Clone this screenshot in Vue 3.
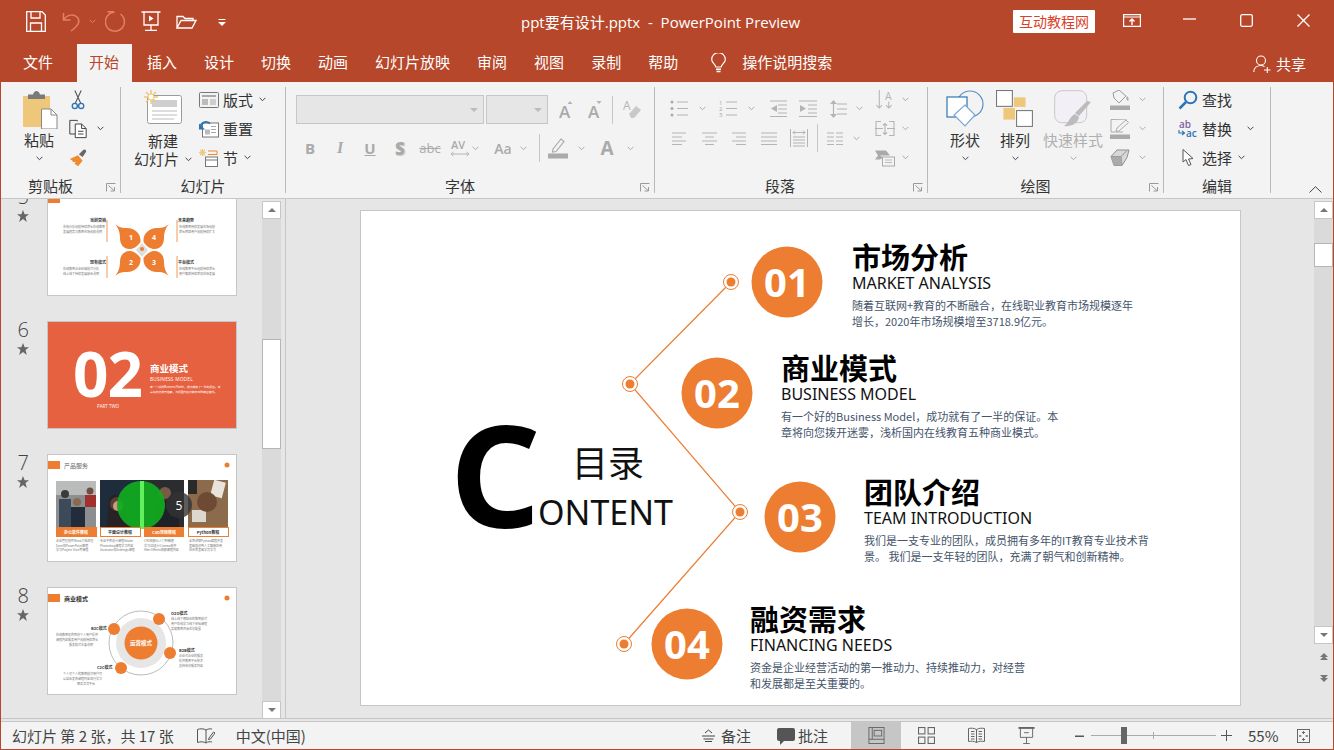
<script setup>
const tabs = ['插入', '设计', '切换', '动画', '幻灯片放映', '审阅', '视图', '录制', '帮助']
const items = [
  { n: '01', cx: 427, cy: 72, cn: 'market', zh: '市场分析', en: 'MARKET ANALYSIS', d: ['随着互联网+教育的不断融合，在线职业教育市场规模逐年', '增长，2020年市场规模增至3718.9亿元。'] },
  { n: '02', cx: 357, cy: 183, cn: 'model', zh: '商业模式', en: 'BUSINESS MODEL', d: ['有一个好的Business Model，成功就有了一半的保证。本', '章将向您拨开迷雾，浅析国内在线教育五种商业模式。'] },
  { n: '03', cx: 440, cy: 307, cn: 'team', zh: '团队介绍', en: 'TEAM INTRODUCTION', d: ['我们是一支专业的团队，成员拥有多年的IT教育专业技术背', '景。 我们是一支年轻的团队，充满了朝气和创新精神。'] },
  { n: '04', cx: 327, cy: 434, cn: 'fund', zh: '融资需求', en: 'FINANCING NEEDS', d: ['资金是企业经营活动的第一推动力、持续推动力，对经营', '和发展都是至关重要的。'] },
]
const nodes = [[371, 72], [270, 174], [380, 302], [264, 434]]
</script>

<template>
  <div class="win">
    <svg class="defs" aria-hidden="true">
      <defs>
        <symbol id="chv" viewBox="0 0 7 5"><path d="M.6.8 3.5 3.7 6.4.8" fill="none" stroke="currentColor" stroke-width="1"/></symbol>
        <symbol id="star" viewBox="0 0 12 12"><path d="M6 0 7.6 4.2H12L8.5 7 9.8 12 6 9.1 2.2 12 3.5 7 0 4.2H4.4Z" fill="#666"/></symbol>
        <symbol id="lnch" viewBox="0 0 10 9"><path d="M.5 8.5V.5H9.500M2.500 2.500 8 7.500M4.500 8H8.500V4" fill="none" stroke="#9a9a9a" stroke-width="1"/></symbol>
      </defs>
    </svg>

    <header class="titlebar">
      <div class="qat">
        <svg class="q1" viewBox="0 0 20 21" fill="none" stroke="#fff" stroke-width="1.300"><path d="M.7.7H16L19.300 4V20.300H.7ZM5 .7V7H14V.7M4.500 20.300V12H15.500V20.300"/></svg>
        <svg class="q2" viewBox="0 0 19 21" fill="none" stroke="#e3806a" stroke-width="1.500"><path d="M1.500 2V9H8.500M2 8.500C5 3.500 12 2.500 15.500 6.500 19 11 15 16 9 20"/></svg>
        <svg class="q3 chev" style="color:#e3806a"><use href="#chv"/></svg>
        <svg class="q4" viewBox="0 0 21 21" fill="none" stroke="#e3806a" stroke-width="1.500"><path d="M15.500 3A9.500 9.500 0 1 1 9.500 1.200M9 0 2.500 1"/></svg>
        <svg class="q5" viewBox="0 0 20 20" fill="none" stroke="#fff" stroke-width="1.300"><path d="M.5 1H19.500M3 1V14H17V1M10 14V19.500M4 19.500H16"/><path d="M8 4.500 12.500 7.500 8 10.500Z" fill="#fff" stroke="none"/></svg>
        <svg class="q6" viewBox="0 0 21 14" fill="none" stroke="#fff" stroke-width="1.300"><path d="M1 13V1.500H7L9 3.500H17V5.500M1 13 5 5.500H20L16 13Z"/></svg>
        <svg class="q7" viewBox="0 0 8 8"><path d="M.5 0H7.500V1H.5ZM0 3H8L4 7Z" fill="#fff"/></svg>
      </div>
      <div class="doc">ppt要有设计.pptx&nbsp; - &nbsp;PowerPoint Preview</div>
      <div class="winctl">
        <span class="brand">互动教程网</span>
        <svg class="w1" viewBox="0 0 18 13" fill="none" stroke="#fff" stroke-width="1.200"><path d="M.6.600H17.400V12.400H.6ZM.6 3H17.400"/><path d="M9 11V5M6.500 7.500 9 5 11.500 7.500" stroke-width="1.400"/></svg>
        <svg class="w2" viewBox="0 0 13 2"><path d="M0 1H13" stroke="#fff" stroke-width="1.300"/></svg>
        <svg class="w3" viewBox="0 0 13 13"><rect x=".7" y=".7" width="11.600" height="11.600" rx="1.500" fill="none" stroke="#fff" stroke-width="1.300"/></svg>
        <svg class="w4" viewBox="0 0 13 13"><path d="M.5.500 12.500 12.500M12.500.500.5 12.500" stroke="#fff" stroke-width="1.300"/></svg>
      </div>
    </header>

    <nav class="tabs">
      <span class="tab file">文件</span>
      <span class="tab active">开始</span>
      <span v-for="t in tabs" :key="t" class="tab">{{ t }}</span>
      <svg class="bulb" viewBox="0 0 15 20" fill="none" stroke="#fff" stroke-width="1.200"><path d="M4.800 14C4.500 11 .7 10 .7 6.500A6.800 6.800 0 0 1 14.300 6.500C14.300 10 10.500 11 10.200 14Z"/><path d="M5 16.200H10M5.500 18.500H9.500" stroke-width="1.500"/></svg>
      <span class="search">操作说明搜索</span>
      <span class="share">
        <svg viewBox="0 0 18 18" fill="none" stroke="#fff" stroke-width="1.100"><circle cx="8" cy="5.500" r="4.500"/><path d="M.7 17C1 13 4 10.500 8 10.500 9.500 10.500 10.500 11 11.500 11.500M11 15H17.500M14.300 12V18"/></svg>
        共享
      </span>
    </nav>

    <section class="ribbon">
      <!-- 剪贴板 -->
      <div class="group g1">
        <div class="gbody">
          <div class="big b-paste">
            <svg class="ic-paste" viewBox="0 0 36 38">
              <rect x="1" y="5" width="27" height="31" rx="1" fill="#eec77b"/>
              <path d="M6 3.500H11Q12 0 14.500 0 17 0 18 3.500H23V8H6Z" fill="#7a7a7a"/>
              <path d="M19.500 18H29L35 24V38H19.500Z" fill="#fff" stroke="#888"/>
              <path d="M29 18V24H35" fill="none" stroke="#888"/>
            </svg>
            <span class="blabel">粘贴</span>
            <svg class="chev dn"><use href="#chv"/></svg>
          </div>
          <div class="col c-clip">
            <div class="row">
              <svg class="ic20" viewBox="0 0 22 21" fill="none"><path d="M7.500 0 14 14M14.500 0 8 14" stroke="#555" stroke-width="1.200"/><circle cx="7.500" cy="17" r="2.800" stroke="#2e75b6" stroke-width="1.500"/><circle cx="14.500" cy="17" r="2.800" stroke="#2e75b6" stroke-width="1.500"/></svg>
            </div>
            <div class="row">
              <svg class="ic20" viewBox="0 0 22 21" fill="none" stroke="#444" stroke-width="1.100"><path d="M8 16H2V1H10L11 2"/><path d="M8 5H15L20 10V20H8Z" fill="#fff"/><path d="M15 5V10H20M11 13H17M11 16H17"/></svg>
              <svg class="chev m9"><use href="#chv"/></svg>
            </div>
            <div class="row">
              <svg class="ic20" viewBox="0 0 22 20"><path d="M2 11 11 7 16 13 11 19 7 16 9 15 5 14 5 13Z" fill="#ed8b2e"/><path d="M12 6 17 1Q20 0 20 3L16 9Z" fill="#666"/></svg>
            </div>
          </div>
        </div>
        <div class="glabel">剪贴板</div>
        <svg class="launch"><use href="#lnch"/></svg>
      </div>
      <i class="sep"></i>

      <!-- 幻灯片 -->
      <div class="group g2">
        <div class="gbody">
          <div class="big b-new">
            <svg class="ic-new" viewBox="0 0 38 34">
              <rect x="3.500" y="5.500" width="34" height="28" rx="2" fill="#fff" stroke="#9a9a9a"/>
              <rect x="8" y="10" width="25" height="7" fill="#cfcfcf"/>
              <path d="M8 21H33M8 25H33M8 29H30" stroke="#bdbdbd" stroke-width="1"/>
              <path d="M7 0V14M0 7H14M2 2 12 12M12 2 2 12" stroke="#eec77b" stroke-width="1.500"/>
              <circle cx="7" cy="7" r="3" fill="#fff" stroke="#eec77b"/>
            </svg>
            <span class="blabel l-new">新建</span>
            <span class="blabel inline">幻灯片<svg class="chev m6"><use href="#chv"/></svg></span>
          </div>
          <div class="col c-slide">
            <div class="row">
              <svg class="ic20" viewBox="0 0 20 16" fill="none" stroke="#777"><rect x=".5" y=".5" width="19" height="15" rx="1"/><rect x="3" y="3" width="14" height="2" fill="#aaa" stroke="none"/><rect x="3" y="7" width="6" height="6" fill="#bbb" stroke="none"/><path d="M11 8H17M11 10H17M11 12H17" stroke="#aaa"/></svg>
              <span class="t4">版式</span><svg class="chev m6"><use href="#chv"/></svg>
            </div>
            <div class="row">
              <svg class="ic20" viewBox="0 0 20 17" fill="none"><rect x="3.500" y="2.500" width="16" height="14" fill="#fff" stroke="#777"/><rect x="6" y="9" width="5" height="5" fill="#bbb"/><path d="M12 6H17M12 9H17M12 12H17" stroke="#aaa"/><path d="M1 7C2 2 7 0 11 3" stroke="#2e75b6" stroke-width="2"/><path d="M0 3V9H6Z" fill="#2e75b6"/></svg>
              <span class="t4">重置</span>
            </div>
            <div class="row">
              <svg class="ic20" viewBox="0 0 20 18" fill="none"><path d="M3.500 0V7M0 3.500H7M1 1 6 6M6 1 1 6" stroke="#eec77b" stroke-width="1.200"/><path d="M9 2H18V5.500H9" stroke="#ed8b2e"/><rect x="6.500" y="8" width="12" height="9.500" stroke="#777" fill="#fff"/><path d="M6.500 11H18.500" stroke="#777"/></svg>
              <span class="t4">节</span><svg class="chev m6"><use href="#chv"/></svg>
            </div>
          </div>
        </div>
        <div class="glabel">幻灯片</div>
      </div>
      <i class="sep"></i>

      <!-- 字体 -->
      <div class="group g3">
        <div class="gbody column">
          <div class="frow fa">
            <span class="combo c1"><i></i></span>
            <span class="combo c2"><i></i></span>
            <svg class="f-a1" viewBox="0 0 15 18"><text x="0" y="17" class="ga big-a">A</text><path d="M8.500 3 11 0 13.500 3Z" fill="#b4b4b4"/></svg>
            <svg class="f-a2" viewBox="0 0 15 18"><text x="0" y="17" class="ga big-a">A</text><path d="M8.500 0 11 3 13.500 0Z" fill="#b4b4b4"/></svg>
            <i class="vline v1"></i>
            <svg class="f-clr" viewBox="0 0 18 19"><text x="0" y="10" class="ga sm-a">A</text><path d="M6 14 13 6 18 10 11 18H8Z" fill="#c9c9c9"/></svg>
          </div>
          <div class="frow fb">
            <span class="fc b">B</span>
            <span class="fc i">I</span>
            <span class="fc u">U</span>
            <span class="fc s">S</span>
            <span class="fc abc">abc</span>
            <svg class="fc-av" viewBox="0 0 20 20"><text x="1" y="11" class="ga av">AV</text><path d="M1 16H19M3.500 14 1 16 3.500 18M16.500 14 19 16 16.500 18" stroke="#b4b4b4" fill="none"/></svg>
            <svg class="chev off m2"><use href="#chv"/></svg>
            <span class="fc aa">Aa</span>
            <svg class="chev off m3"><use href="#chv"/></svg>
            <i class="vline v2"></i>
            <svg class="f-hl" viewBox="0 0 20 21"><path d="M5 11 13 1 16 3.500 8 13.500 4.500 14Z" fill="none" stroke="#aaa" stroke-width="1.200"/><rect y="15.500" width="20" height="5" fill="#aaa"/></svg>
            <svg class="chev off m10"><use href="#chv"/></svg>
            <span class="fc bigA">A</span>
            <svg class="chev off m10"><use href="#chv"/></svg>
          </div>
        </div>
        <div class="glabel">字体</div>
        <svg class="launch"><use href="#lnch"/></svg>
      </div>
      <i class="sep"></i>

      <!-- 段落 -->
      <div class="group g4">
        <div class="gbody">
          <div class="pleft">
            <div class="prow p1">
              <svg class="p18" viewBox="0 0 18 17" stroke="#b4b4b4"><circle cx="2" cy="2" r="1.500" fill="#aaa" stroke="none"/><circle cx="2" cy="8.500" r="1.500" fill="#aaa" stroke="none"/><circle cx="2" cy="15" r="1.500" fill="#aaa" stroke="none"/><path d="M7 2H18M7 8.500H18M7 15H18"/></svg>
              <svg class="chev off pm11"><use href="#chv"/></svg>
              <svg class="p18 pm13" viewBox="0 0 18 17" stroke="#b4b4b4"><text x="0" y="5" class="nums">1</text><text x="0" y="11" class="nums">2</text><text x="0" y="17" class="nums">3</text><path d="M7 2H18M7 8.500H18M7 15H18"/></svg>
              <svg class="chev off pm11"><use href="#chv"/></svg>
              <svg class="p18 pm14" viewBox="0 0 18 17" stroke="#b4b4b4" fill="none"><path d="M1 1H18M9 5H18M9 9H18M9 13H18M1 16.500H18"/><path d="M8 5 2 8.500 8 12Z" fill="#b4b4b4" stroke="none"/></svg>
              <svg class="p18 pm12" viewBox="0 0 18 17" stroke="#b4b4b4" fill="none"><path d="M0 1H18M9 5H18M9 9H18M9 13H18M0 16.500H18"/><path d="M1 5 7 8.500 1 12Z" fill="#b4b4b4" stroke="none"/></svg>
              <svg class="p17 pm13" viewBox="0 0 17 18" stroke="#b4b4b4" fill="none"><path d="M3.500 3V15M7 4H17M7 9H17M7 14H17" stroke-width="1.200"/><path d="M0 4 3.500 0 7 4ZM0 14 3.500 18 7 14Z" fill="#b4b4b4" stroke="none"/></svg>
              <svg class="chev off pm9"><use href="#chv"/></svg>
            </div>
            <div class="prow p2">
              <svg class="ap a14" viewBox="0 0 14 13" stroke="#b4b4b4"><path d="M0 1H14M0 5H10M0 9H14M0 12.500H10"/></svg>
              <svg class="ap a15 pm16" viewBox="0 0 15 13" stroke="#b4b4b4"><path d="M0 1H15M3 5H12M0 9H15M3 12.500H12"/></svg>
              <svg class="ap a14 pm15" viewBox="0 0 14 13" stroke="#b4b4b4"><path d="M0 1H14M4 5H14M0 9H14M4 12.500H14"/></svg>
              <svg class="ap a16 pm15" viewBox="0 0 16 13" stroke="#b4b4b4"><path d="M0 1H16M0 5H16M0 9H16M0 12.500H16"/></svg>
              <svg class="ap a18 pm13" viewBox="0 0 18 19" stroke="#b4b4b4" fill="none"><path d="M.5 0V18M17.500 0V18M3 8H15M3 11H15M3 14H15M3 17H15M3 3.500H15M5 1.500 3 3.500 5 5.500M13 1.500 15 3.500 13 5.500"/></svg>
              <i class="vline v3"></i>
              <svg class="ap a16 pm9" viewBox="0 0 16 13" stroke="#b4b4b4"><path d="M0 1H7M9 1H16M0 5H7M9 5H16M0 9H7M9 9H16M0 12.500H7M9 12.500H16"/></svg>
              <svg class="chev off pm10"><use href="#chv"/></svg>
            </div>
          </div>
          <div class="col">
            <div class="row">
              <svg class="pic" viewBox="0 0 20 21" fill="none" stroke="#b4b4b4" stroke-width="1.100"><path d="M4 0V19M1 16 4 19 7 16M14 12V19M11 16 14 19 17 16"/><text x="10" y="10" class="ga sm-b">A</text></svg>
              <svg class="chev off pm7"><use href="#chv"/></svg>
            </div>
            <div class="row">
              <svg class="pic" viewBox="0 0 20 17" fill="none" stroke="#b4b4b4" stroke-width="1.100"><path d="M6 1H1V15H6M14 1H19V15H14M0 8H8M12 8H20M10 3V14M8 5 10 3 12 5M8 12 10 14 12 12"/></svg>
              <svg class="chev off pm7"><use href="#chv"/></svg>
            </div>
            <div class="row">
              <svg class="pic" viewBox="0 0 20 17"><path d="M0 1H11L15 6H5L8 8 5 10H0L3 6Z" fill="#aaa"/><rect x="7.500" y="7.500" width="12" height="9" fill="#f3f3f3" stroke="#aaa"/><path d="M10 10.500H17M10 13H17" stroke="#bbb"/></svg>
              <svg class="chev off pm7"><use href="#chv"/></svg>
            </div>
          </div>
        </div>
        <div class="glabel">段落</div>
        <svg class="launch"><use href="#lnch"/></svg>
      </div>
      <i class="sep"></i>

      <!-- 绘图 -->
      <div class="group g5">
        <div class="gbody">
          <div class="big b-shape">
            <svg class="ic-shape" viewBox="0 0 38 38" fill="none" stroke="#5b8fc7" stroke-width="1.200">
              <circle cx="24" cy="14" r="13"/>
              <rect x="1" y="7" width="20" height="20" fill="#fff" stroke="#2e75b6"/>
              <path d="M19 15 29 25 19 36 8 25Z" fill="#fff" stroke="#7aa6d6"/>
            </svg>
            <span class="blabel">形状</span>
            <svg class="chev dn"><use href="#chv"/></svg>
          </div>
          <div class="big b-arr">
            <svg class="ic-shape" viewBox="0 0 36 36">
              <rect x=".5" y=".5" width="15" height="15" fill="#fff" stroke="#777"/>
              <rect x="17" y="7" width="11" height="9" fill="#eec77b"/>
              <rect x="7" y="17" width="11" height="11" fill="#eec77b"/>
              <rect x="19.500" y="19.500" width="15" height="15" fill="#fff" stroke="#777"/>
            </svg>
            <span class="blabel">排列</span>
            <svg class="chev dn"><use href="#chv"/></svg>
          </div>
          <div class="big b-quick">
            <svg class="ic-shape" viewBox="0 0 38 38">
              <rect x=".7" y=".7" width="32" height="32" rx="7" fill="#f3eff6" stroke="#c8c8c8"/>
              <path d="M37 12 25 26 21 23 33 11ZM21 24 25 27C24 34 16 37 10 36 15 33 15 27 21 24Z" fill="#bcbcbc"/>
            </svg>
            <span class="blabel gray">快速样式</span>
            <svg class="chev off dn"><use href="#chv"/></svg>
          </div>
          <div class="col c-draw">
            <div class="row">
              <svg class="ic20" viewBox="0 0 20 20"><path d="M3 3 9 0 16 6 9 13 4 8Z" fill="#f3f3f3" stroke="#9a9a9a"/><path d="M17 6C19 8 19 10 18 11 16 10 16 8 17 6Z" fill="#aaa"/><rect y="15.500" width="20" height="4.500" fill="#aaa"/></svg>
              <svg class="chev off m9"><use href="#chv"/></svg>
            </div>
            <div class="row">
              <svg class="ic20" viewBox="0 0 20 20" fill="none"><path d="M17 0 1 .5V13H13" stroke="#aaa"/><path d="M7 9 16 1 18.500 3.500 9 12 6 12.500Z" fill="#f3f3f3" stroke="#aaa"/><rect y="15.500" width="20" height="4.500" fill="#aaa"/></svg>
              <svg class="chev off m9"><use href="#chv"/></svg>
            </div>
            <div class="row">
              <svg class="ic20" viewBox="0 0 20 17"><path d="M1 7 7 .5H19L17 8 12 16H4Z" fill="#d8d8d8" stroke="#8f8f8f"/><path d="M1 7H11L17 1M11 7 12 16" stroke="#8f8f8f" fill="none"/><path d="M1 7 11 7 12 16H4Z" fill="#aaa"/></svg>
              <svg class="chev off m9"><use href="#chv"/></svg>
            </div>
          </div>
        </div>
        <div class="glabel">绘图</div>
        <svg class="launch"><use href="#lnch"/></svg>
      </div>
      <i class="sep"></i>

      <!-- 编辑 -->
      <div class="group g6">
        <div class="gbody">
          <div class="col c-edit">
            <div class="row">
              <svg class="ic20" viewBox="0 0 20 19" fill="none"><circle cx="12.500" cy="7" r="5.800" stroke="#2e75b6" stroke-width="2"/><path d="M8 11.500 1.500 18" stroke="#2e75b6" stroke-width="2.500"/></svg>
              <span class="t4">查找</span>
            </div>
            <div class="row">
              <svg class="ic20" viewBox="0 0 20 18"><text x="1" y="8" class="abt pur">ab</text><text x="8" y="17" class="abt blu">ac</text><path d="M1 10V13H6M4 11 6.500 13 4 15" fill="none" stroke="#2e75b6" stroke-width="1.200"/></svg>
              <span class="t4">替换</span><svg class="chev m15"><use href="#chv"/></svg>
            </div>
            <div class="row">
              <svg class="ic20" viewBox="0 0 20 18"><path d="M5 .5V13L8 10.500 10.500 16.500 13 15.500 10.500 10 15 9.500Z" fill="#fff" stroke="#555"/></svg>
              <span class="t4">选择</span><svg class="chev m6"><use href="#chv"/></svg>
            </div>
          </div>
        </div>
        <div class="glabel">编辑</div>
      </div>
      <i class="sep"></i>
      <div class="collapse">
        <svg viewBox="0 0 13 7"><path d="M.5 6.500 6.500.7 12.500 6.500" fill="none" stroke="#444"/></svg>
      </div>
    </section>

    <main class="work">
      <aside class="panel">
        <div class="list">
          <div class="item">
            <div class="idx"><span class="num">5</span><svg class="star"><use href="#star"/></svg></div>
            <svg class="thumb" viewBox="0 0 190 108">
              <rect width="190" height="108" fill="#fff"/>
              <rect x="1" y="7" width="12" height="8" fill="#ed7d31"/>
              <g fill="#ed7d31">
                <path id="pt" d="M65 32C70 39 73 40 80 40 88 40 93.500 46 93.500 52V54C90 59 86 61 83 61 76 61 73 56 73 50 73 42 70 38 65 32Z"/>
                <path d="M125 32C120 39 117 40 110 40 102 40 96.500 46 96.500 52V54C100 59 104 61 107 61 114 61 117 56 117 50 117 42 120 38 125 32Z"/>
                <path d="M65 92C70 85 73 84 80 84 88 84 93.500 78 93.500 72V70C90 65 86 63 83 63 76 63 73 68 73 74 73 82 70 86 65 92Z"/>
                <path d="M125 92C120 85 117 84 110 84 102 84 96.500 78 96.500 72V70C100 65 104 63 107 63 114 63 117 68 117 74 117 82 120 86 125 92Z"/>
                <path d="M60 32V54M60 68V90M130 32V54M130 68V90" stroke="#ed7d31" stroke-width=".8"/>
              </g>
              <path d="M95 55 101 62 95 69 89 62Z" fill="#ddd"/>
              <circle cx="95" cy="61" r="2" fill="#ed7d31"/>
              <text x="84" y="52" class="tw">1</text><text x="107" y="52" class="tw">4</text>
              <text x="84" y="77" class="tw">2</text><text x="107" y="77" class="tw">3</text>
              <g class="tiny">
                <text x="43" y="34" class="bd">当前营销</text><text x="16" y="40">市场分析规模持续增长在线教育</text><text x="16" y="45">发展趋势与教育市场规模说明</text>
                <text x="131" y="34" class="bd">未来趋势</text><text x="132" y="40">在线教育持续发展市场规模</text><text x="132" y="45">增长明显用户规模持续扩大</text>
                <text x="43" y="76" class="bd">现有模式</text><text x="16" y="82">在线教育企业经营模式分析</text><text x="16" y="87">线上线下持续发展融合说明</text>
                <text x="131" y="76" class="bd">平台模式</text><text x="132" y="82">在线教育平台规模持续增长</text><text x="132" y="87">用户需求持续增加市场发展</text>
              </g>
            </svg>
          </div>
          <div class="item">
            <div class="idx"><span class="num">6</span><svg class="star"><use href="#star"/></svg></div>
            <svg class="thumb" viewBox="0 0 190 108">
              <rect width="190" height="108" fill="#e6613f"/>
              <text x="26" y="76" class="t02">02</text>
              <text x="103" y="51" class="t-h">商业模式</text>
              <text x="103" y="60" class="t-e">BUSINESS MODEL</text>
              <text x="103" y="67" class="t-s">有一个好的Business Model，成功就有了一半的保证。本</text>
              <text x="103" y="72" class="t-s">章将向您拨开迷雾，浅析国内在线教育五种商业模式。</text>
              <text x="50" y="87" class="t-p">PART TWO</text>
            </svg>
          </div>
          <div class="item">
            <div class="idx"><span class="num">7</span><svg class="star"><use href="#star"/></svg></div>
            <svg class="thumb" viewBox="0 0 190 108">
              <rect width="190" height="108" fill="#fff"/>
              <rect x="1" y="7" width="12" height="8" fill="#ed7d31"/>
              <text x="17" y="13.500" class="hd">产品服务</text>
              <circle cx="180" cy="11" r="2.500" fill="#ed7d31"/>
              <rect x="9" y="27" width="40" height="46" fill="#8b8f90"/>
              <rect x="9" y="27" width="40" height="14" fill="#b9bcbb"/>
              <circle cx="18" cy="40" r="4" fill="#3a3a3a"/><rect x="12" y="45" width="12" height="28" fill="#3d4a5a"/>
              <circle cx="43" cy="37" r="3.500" fill="#6d5040"/><rect x="38" y="41" width="11" height="12" fill="#a0312f"/>
              <circle cx="30" cy="48" r="4" fill="#8a6a50"/><rect x="24" y="53" width="14" height="20" fill="#222c3a"/>
              <rect x="53" y="26" width="44" height="47" fill="#1e2c3c"/>
              <circle cx="70" cy="50" r="7" fill="#c98f72"/><path d="M62 48C62 38 78 38 78 50L82 73H60Z" fill="#2a1e1c" opacity=".7"/><circle cx="71" cy="52" r="5" fill="#cf9a7f"/>
              <rect x="97" y="26" width="40" height="47" fill="#2a2c30"/>
              <circle cx="118" cy="39" r="6" fill="#7a5b45"/><rect x="108" y="46" width="24" height="27" fill="#1e2228"/>
              <rect x="141" y="26" width="40" height="47" fill="#8c6b4c"/>
              <rect x="141" y="26" width="9" height="14" fill="#2a2a2a"/>
              <rect x="165" y="27" width="12" height="16" fill="#e8e4dc" transform="rotate(15 171 35)"/>
              <rect x="145" y="56" width="14" height="12" fill="#ddd8cf"/>
              <circle cx="160" cy="48" r="10" fill="#6e4a34"/>
              <circle cx="94" cy="51" r="24" fill="#11ab1f" opacity=".93"/>
              <rect x="93" y="27" width="4" height="48" fill="#62f05e"/>
              <circle cx="132" cy="51" r="13" fill="#333" opacity=".8"/>
              <text x="132" y="56" class="five">5</text>
              <rect x="9" y="73" width="41" height="10" fill="#ed7d31"/><text x="29" y="80" class="lb w">办公软件教程</text>
              <rect x="53.500" y="73.500" width="40" height="9" fill="#fff" stroke="#ed7d31"/><text x="73" y="80" class="lb">平面设计教程</text>
              <rect x="97" y="73" width="40" height="10" fill="#ed7d31"/><text x="117" y="80" class="lb w">C4D视频教程</text>
              <rect x="141.500" y="73.500" width="40" height="9" fill="#fff" stroke="#ed7d31"/><text x="161" y="80" class="lb">Python教程</text>
              <g class="tiny">
                <text x="9" y="88">企业管理软件Word文档处理</text><text x="9" y="92.500">Excel和PowerPoint教程</text><text x="9" y="97">学习Project Visio等课程</text>
                <text x="53" y="88">专业平面设计课程Adobe</text><text x="53" y="92.500">Photoshop课程学习内容</text><text x="53" y="97">Illustrator和Indesign课程</text>
                <text x="97" y="88">C4D视频从入门到精通</text><text x="97" y="92.500">学习3D设计Cinema软件</text><text x="97" y="97">After Effects视频课程内容</text>
                <text x="142" y="88">全面讲解Python编程开发</text><text x="142" y="92.500">基础知识到人工智能应用</text><text x="142" y="97">适合零基础学员学习</text>
              </g>
            </svg>
          </div>
          <div class="item">
            <div class="idx"><span class="num">8</span><svg class="star"><use href="#star"/></svg></div>
            <svg class="thumb" viewBox="0 0 190 108">
              <rect width="190" height="108" fill="#fff"/>
              <rect x="1" y="7" width="12" height="8" fill="#ed7d31"/>
              <text x="17" y="13.500" class="hd bd2">商业模式</text>
              <circle cx="180" cy="11" r="2.500" fill="#ed7d31"/>
              <circle cx="94" cy="56" r="32" fill="none" stroke="#bbb"/>
              <circle cx="94" cy="56" r="25" fill="#e6e6e6"/>
              <circle cx="94" cy="56" r="16.500" fill="#ed7d31"/>
              <text x="94" y="58" class="lb2">运营模式</text>
              <circle cx="67" cy="42" r="6" fill="#ed7d31"/><circle cx="112" cy="32" r="6" fill="#ed7d31"/>
              <circle cx="123" cy="66" r="6" fill="#ed7d31"/><circle cx="74" cy="81" r="6" fill="#ed7d31"/>
              <g class="tiny">
                <text x="44" y="43" class="bd">B2C模式</text><text x="9" y="49">在线教育机构面向个人用户提供</text><text x="9" y="54">课程内容服务用户规模持续增长</text><text x="22" y="59">服务模式主要说明</text>
                <text x="124" y="28" class="bd">O2O模式</text><text x="124" y="33">线上线下相结合的教育模式</text><text x="124" y="38">用户在线学习线下体验课程</text><text x="124" y="43">实现教育资源优化配置</text>
                <text x="132" y="65" class="bd">B2B模式</text><text x="132" y="70">企业对企业的服务</text><text x="132" y="75">提供教育平台技术</text><text x="132" y="80">支持培训服务内容</text>
                <text x="50" y="82" class="bd">C2C模式</text><text x="16" y="88">个人对个人的教育模式用户可</text><text x="16" y="93">以自由发布课程内容进行学习</text><text x="30" y="98">相互交流平台</text>
              </g>
            </svg>
          </div>
          <div class="item">
            <div class="idx"><span class="num">9</span></div>
            <svg class="thumb" viewBox="0 0 190 108"><rect width="190" height="108" fill="#fff"/></svg>
          </div>
        </div>
        <div class="sb sb-l">
          <button class="sbtn"><i class="up"></i></button>
          <div class="track lt"><span class="thumb-l"></span></div>
          <button class="sbtn"><i class="dn2"></i></button>
        </div>
      </aside>

      <div class="stage">
        <div class="slide">
          <svg class="art" viewBox="0 0 881 496">
            <path d="M371 72 270 174 380 302 264 434" fill="none" stroke="#ed7d31" stroke-width="1.200"/>
            <g v-for="(p, i) in nodes" :key="i">
              <circle :cx="p[0]" :cy="p[1]" r="7.500" fill="#fff" stroke="#ed7d31" stroke-width="1"/>
              <circle :cx="p[0]" :cy="p[1]" r="4.500" fill="#ed7d31"/>
            </g>
            <g v-for="it in items" :key="it.n">
              <circle :cx="it.cx" :cy="it.cy" r="35.500" fill="#ed7d31"/>
              <text :x="it.cx" :y="it.cy + 15" class="circ">{{ it.n }}</text>
            </g>
          </svg>
          <div class="bigc">C</div>
          <div class="mulu">目录</div>
          <div class="ontent">ONTENT</div>
          <div v-for="it in items" :key="it.cn" class="block" :class="it.cn">
            <div class="zh">{{ it.zh }}</div>
            <div class="en">{{ it.en }}</div>
            <div class="desc"><div v-for="l in it.d" :key="l">{{ l }}</div></div>
          </div>
        </div>
        <div class="sb sb-r">
          <button class="sbtn"><i class="up"></i></button>
          <div class="track rt"><span class="thumb-r"></span></div>
          <button class="sbtn"><i class="dn2"></i></button>
          <div class="dbl"><i class="up"></i><i class="up"></i></div>
          <div class="dbl d2"><i class="dn2"></i><i class="dn2"></i></div>
        </div>
      </div>
    </main>

    <footer class="status">
      <span class="st1">幻灯片 第 2 张，共 17 张</span>
      <svg class="st-note" viewBox="0 0 18 16" fill="none" stroke="#555"><path d="M9 2C7 .5 3 .5 .5 1.500V14.500C3 13.500 7 13.500 9 15 11 13.500 13 13.500 15 14M9 2V15"/><path d="M12 10 16.500 4 18 5 13.500 11 11.500 11.500ZM9 2C10.500 1 13 .6 15 1" /></svg>
      <span class="st-lang">中文(中国)</span>
      <span class="grow"></span>
      <svg class="st-n" viewBox="0 0 13 13" fill="none" stroke="#444"><path d="M3 4 6.500 1 10 4M0 7H13M1.500 10H11.500M3 12.500H10"/></svg>
      <span class="st-t">备注</span>
      <svg class="st-c" viewBox="0 0 18 18"><path d="M2 1H16Q18 1 18 3V12Q18 14 16 14H7L3 18V14H2Q0 14 0 12V3Q0 1 2 1Z" fill="#555"/></svg>
      <span class="st-t2">批注</span>
      <span class="vb on"><svg viewBox="0 0 17 18" fill="none" stroke="#666"><rect x=".5" y=".5" width="16" height="17"/><path d="M.5 13H16.500M4 .5V13"/><rect x="6" y="3.500" width="8" height="6"/></svg></span>
      <span class="vb"><svg viewBox="0 0 16 16" fill="none" stroke="#666"><rect x=".5" y=".5" width="6" height="6"/><rect x="9.500" y=".5" width="6" height="6"/><rect x=".5" y="9.500" width="6" height="6"/><rect x="9.500" y="9.500" width="6" height="6"/></svg></span>
      <span class="vb"><svg viewBox="0 0 17 16" fill="none" stroke="#666"><path d="M8.500 2C6 .5 3 .5.500 1V14C3 13.500 6 13.500 8.500 15 11 13.500 14 13.500 16.500 14V1C14 .5 11 .5 8.500 2ZM8.500 2V15M3 4H6.500M3 6.500H6.500M3 9H6.500M3 11.500H6.500M10.500 4H14M10.500 6.500H14M10.500 9H14M10.500 11.500H14"/></svg></span>
      <span class="vb"><svg viewBox="0 0 17 18" fill="none" stroke="#666"><path d="M0 1H17" stroke-width="2"/><path d="M2 1V11H15V1M8.500 11V17M5 17.500H12M6 6H11" /></svg></span>
      <svg class="zm-minus" viewBox="0 0 9 1"><rect width="9" height="1.500" fill="#555"/></svg>
      <span class="slider"><i class="tick"></i><i class="knob"></i></span>
      <svg class="zm-plus" viewBox="0 0 11 11"><path d="M0 5.500H11M5.500 0V11" stroke="#555"/></svg>
      <span class="pct">55%</span>
      <svg class="fit" viewBox="0 0 13 14" fill="none" stroke="#666"><rect x=".5" y=".5" width="12" height="13"/><path d="M6.500 2.500V5M5 4 6.500 2.500 8 4M6.500 9V11.500M5 10 6.500 11.500 8 10M2.500 7H4.500M3.500 6 2.500 7 3.500 8M8.500 7H10.500M9.500 6 10.500 7 9.500 8"/></svg>
    </footer>
  </div>
</template>

<style>
html, body { margin: 0; background: #e6e6e6; }
</style>

<style scoped>
.win { width: 1334px; height: 750px; box-sizing: border-box; display: flex; flex-direction: column; overflow: hidden; border: solid #b7472a; border-width: 0 1px 1px; background: #e6e6e6; font-family: "Noto Sans CJK SC", "Noto Sans", sans-serif; color: #333; position: relative; }
.defs { position: absolute; width: 0; height: 0; }
svg { display: block; flex: none; }
i { display: block; font-style: normal; }

/* title bar */
.titlebar { height: 44px; flex: none; margin: 0 -1px; background: #b7472a; display: flex; align-items: flex-start; color: #fff; }
.qat { width: 515px; display: flex; align-items: center; height: 42px; padding-left: 26px; box-sizing: border-box; }
.q1 { width: 20px; height: 21px; }
.q2 { width: 19px; height: 21px; margin-left: 16px; }
.q3 { width: 7px; height: 5px; margin-left: 8px; }
.q4 { width: 21px; height: 21px; margin-left: 9px; }
.q5 { width: 20px; height: 20px; margin-left: 15px; }
.q6 { width: 21px; height: 14px; margin-left: 15px; margin-top: 1px; }
.q7 { width: 8px; height: 8px; margin-left: 21px; margin-top: 3px; }
.doc { width: 298px; margin-left: 6px; height: 42px; line-height: 44px; font-family: "Open Sans", "Noto Sans CJK SC", sans-serif; font-size: 15px; white-space: nowrap; }
.winctl { flex: 1; display: flex; align-items: center; height: 42px; padding-left: 194px; }
.brand { width: 82px; height: 23px; margin-top: 0; background: #fff; border-radius: 1px; color: #d9412b; font-size: 14px; line-height: 23px; text-align: center; white-space: nowrap; }
.w1 { width: 18px; height: 13px; margin-left: 28px; margin-top: -2px; }
.w2 { width: 13px; height: 2px; margin-left: 42px; margin-top: -4px; }
.w3 { width: 13px; height: 13px; margin-left: 44px; margin-top: -2px; }
.w4 { width: 13px; height: 13px; margin-left: 44px; margin-top: -2px; }

/* tabs */
.tabs { height: 38px; flex: none; margin: 0 -1px; background: #b7472a; display: flex; align-items: stretch; font-size: 15px; color: #fff; }
.tab { padding: 0 13.500px; line-height: 36px; white-space: nowrap; }
.tab.file { margin-left: 9.500px; margin-right: 10.500px; padding: 0 13.500px; }
.tab.active { background: #f3f3f3; color: #b7472a; padding: 0 12px; margin: 0 1.500px 0 0; width: 31px; }
.bulb { width: 15px; height: 20px; margin: 9px 0 0 19.500px; }
.search { margin-left: 16px; line-height: 36px; }
.share { margin-left: auto; margin-right: 28px; display: flex; align-items: center; gap: 5px; height: 38px; }
.share svg { width: 18px; height: 18px; margin-top: 2px; }

/* ribbon */
.ribbon { height: 117px; flex: none; background: #f3f3f3; border-bottom: 1px solid #c6c6c6; box-sizing: border-box; display: flex; font-size: 15px; color: #333; }
.group { position: relative; display: flex; flex-direction: column; padding-top: 3px; box-sizing: border-box; height: 116px; flex: none; }
.g1 { width: 119px; } .g2 { width: 164px; } .g3 { width: 368px; } .g4 { width: 272px; } .g5 { width: 235px; } .g6 { width: 106px; }
.gbody { height: 87px; display: flex; }
.gbody.column { flex-direction: column; }
.glabel { margin-top: 4px; line-height: 20px; text-align: center; font-size: 15px; color: #333; }
.g1 .glabel, .g3 .glabel, .g5 .glabel { padding-right: 20px; }
.g4 .glabel { padding-right: 22px; }
.sep { width: 1px; height: 106px; margin-top: 5px; background: #b9b9b9; flex: none; }
.launch { position: absolute; right: 4px; bottom: 6px; width: 10px; height: 9px; }
.big { display: flex; flex-direction: column; align-items: center; flex: none; }
.blabel { line-height: 18px; white-space: nowrap; }
.blabel.inline { display: flex; align-items: center; }
.blabel.gray { color: #b0b0b0; }
.chev { width: 7px; height: 5px; color: #444; flex: none; }
.chev.off { color: #aaa; }
.chev.dn { margin-top: 7px; }
.m2 { margin-left: 2px; } .m3 { margin-left: 3px; } .m6 { margin-left: 6px; } .m9 { margin-left: 9px; } .m10 { margin-left: 10px; } .m15 { margin-left: 15px; }
.col { display: flex; flex-direction: column; flex: none; }
.row { height: 29px; display: flex; align-items: center; white-space: nowrap; }
.ic20 { width: 20px; height: 20px; }
.t4 { margin-left: 4px; }

.b-paste { margin-left: 18px; width: 40px; }
.ic-paste { width: 36px; height: 38px; margin-top: 6px; margin-bottom: 2px; margin-left: 2px; }
.c-clip { margin-left: 9px; }
.b-new { margin-left: 12px; width: 60px; }
.ic-new { width: 38px; height: 34px; margin-top: 5px; }
.l-new { margin-top: 8px; }
.c-slide { margin-left: 6px; }

.fa { margin: 10px 0 0 10px; height: 29px; }
.frow { display: flex; align-items: center; }
.combo { height: 29px; box-sizing: border-box; background: #e6e6e6; border: 1px solid #c6c6c6; display: flex; align-items: center; justify-content: flex-end; padding-right: 5px; }
.combo i { width: 0; height: 0; border: 4px solid transparent; border-top: 4px solid #bbb; border-bottom: 0; }
.c1 { width: 188px; } .c2 { width: 62px; margin-left: 2px; }
.f-a1 { width: 15px; height: 18px; margin-left: 11px; }
.f-a2 { width: 15px; height: 18px; margin-left: 14px; }
.vline { width: 1px; height: 28px; background: #c6c6c6; flex: none; }
.v1 { margin-left: 9px; }
.f-clr { width: 18px; height: 19px; margin-left: 10px; }
.ga { fill: #aaa; font-family: "Open Sans", sans-serif; }
.big-a { font-size: 17px; font-weight: 600; }
.sm-a { font-size: 12px; fill: #b4b4b4; }
.sm-b { font-size: 11px; fill: #b4b4b4; stroke: none; }
.av { font-size: 11px; font-weight: 600; }
.fb { margin: 10px 0 0 9px; height: 28px; }
.fc { width: 30px; text-align: center; color: #aaa; font-family: "Open Sans", sans-serif; font-size: 15px; flex: none; }
.fc.b { font-weight: 700; }
.fc.i { font-style: italic; font-family: "Liberation Serif", serif; font-weight: 700; font-size: 16px; }
.fc.u { text-decoration: underline; font-weight: 700; }
.fc.s { font-weight: 800; font-size: 17px; text-shadow: 1px 1px 1px #ccc; }
.fc.abc { text-decoration: line-through; font-size: 13px; }
.fc-av { width: 20px; height: 20px; margin-left: 5px; }
.fc.aa { width: 28px; margin-left: 10px; font-size: 14px; font-weight: 600; }
.v2 { margin-left: 12px; }
.f-hl { width: 20px; height: 21px; margin-left: 8px; }
.fc.bigA { width: 20px; margin-left: 12px; font-size: 19px; font-weight: 700; }

.pleft { width: 215px; flex: none; }
.prow { display: flex; align-items: center; }
.p1 { height: 29px; margin-top: 9px; padding-left: 15px; }
.p2 { height: 28px; margin-top: 1px; padding-left: 17px; }
.nums { font: 6px "Open Sans", sans-serif; fill: #aaa; stroke: none; }
.p18 { width: 18px; height: 17px; } .p17 { width: 17px; height: 18px; }
.pm7 { margin-left: 7px; } .pm9 { margin-left: 9px; } .pm10 { margin-left: 10px; } .pm11 { margin-left: 11px; } .pm12 { margin-left: 12px; } .pm13 { margin-left: 13px; } .pm14 { margin-left: 14px; } .pm15 { margin-left: 15px; } .pm16 { margin-left: 16px; }
.a14 { width: 14px; height: 13px; } .a15 { width: 15px; height: 13px; } .a16 { width: 16px; height: 13px; } .a18 { width: 18px; height: 19px; }
.v3 { margin-left: 9px; }
.pic { width: 20px; height: 20px; margin-left: 5px; }

.b-shape { margin-left: 12px; width: 50px; }
.b-arr { width: 50px; }
.b-quick { width: 66px; }
.ic-shape { width: 38px; height: 38px; margin-top: 5px; margin-bottom: 3px; }
.c-draw { margin-left: 4px; }
.c-edit { margin-left: 14px; }
.abt { font: 600 10px "Open Sans", sans-serif; }
.pur { fill: #8064a2; } .blu { fill: #2e75b6; }
.collapse { flex: 1; display: flex; align-items: flex-end; justify-content: flex-end; padding: 0 11px 5px 0; }
.collapse svg { width: 13px; height: 7px; }

/* workspace */
.work { flex: none; height: 520px; display: flex; border-bottom: 1px solid #c6c6c6; box-sizing: border-box; }
.panel { width: 284px; flex: none; display: flex; border-right: 1px solid #c6c6c6; box-sizing: content-box; padding-right: 0; }
.list { width: 261px; height: 100%; overflow: hidden; flex: none; }
.item { display: flex; margin-bottom: 25px; }
.item:first-child { margin-top: -11px; }
.idx { width: 46px; flex: none; display: flex; flex-direction: column; align-items: flex-end; padding-right: 18px; box-sizing: border-box; }
.num { font: 300 20px/22px "Open Sans", sans-serif; color: #444; margin-top: -2px; }
.star { width: 12px; height: 12px; margin-top: 2px; }
.thumb { width: 190px; height: 108px; outline: 1px solid #c6c6c6; outline-offset: -1px; }
.tiny text { font: 3px "Noto Sans CJK SC", sans-serif; fill: #777; }
.tiny text.bd { font-size: 4px; font-weight: 700; fill: #333; }
.tw { font: 700 7px "Open Sans", sans-serif; fill: #fff; text-anchor: middle; }
.t02 { font: 700 62px "Open Sans", sans-serif; fill: #fff; letter-spacing: -1px; }
.t-h { font: 700 9.500px "Noto Sans CJK SC", sans-serif; fill: #fff; }
.t-e { font: 4.800px "Open Sans", sans-serif; fill: #fff; letter-spacing: .2px; }
.t-s { font: 2.800px "Noto Sans CJK SC", sans-serif; fill: #fff; }
.t-p { font: 4.500px "Open Sans", sans-serif; fill: #fff; }
.hd { font: 6px "Noto Sans CJK SC", sans-serif; fill: #666; }
.bd2 { font-weight: 700; fill: #333; }
.five { font: 12px "Open Sans", sans-serif; fill: #fff; text-anchor: middle; }
.lb { font: 700 4px "Noto Sans CJK SC", sans-serif; fill: #333; text-anchor: middle; }
.lb.w { fill: #fff; }
.lb2 { font: 700 5.500px "Noto Sans CJK SC", sans-serif; fill: #fff; text-anchor: middle; }

.sb { width: 19px; flex: none; display: flex; flex-direction: column; padding-top: 2px; box-sizing: border-box; }
.sb-l { margin-left: 0; }
.sbtn { height: 18px; width: 19px; padding: 0; flex: none; background: #fff; border: 1px solid #c6c6c6; box-sizing: border-box; display: flex; align-items: center; justify-content: center; }
.up { width: 0; height: 0; border: 4.500px solid transparent; border-top: 0; border-bottom: 4.500px solid #777; }
.dn2 { width: 0; height: 0; border: 4.500px solid transparent; border-bottom: 0; border-top: 4.500px solid #777; }
.track { background: #dadada; flex: none; display: flex; flex-direction: column; }
.track.lt { height: 482px; }
.track.rt { height: 407px; }
.thumb-l { width: 19px; height: 110px; margin-top: 120px; background: #fff; border: 1px solid #b5b5b5; box-sizing: border-box; }
.thumb-r { width: 19px; height: 24px; margin-top: 24px; background: #fff; border: 1px solid #b5b5b5; box-sizing: border-box; }
.dbl { height: 22px; display: flex; flex-direction: column; align-items: center; justify-content: center; margin-top: 0; padding-top: 2px; box-sizing: border-box; }
.dbl.d2 { margin-top: 0; }
.dbl i + i { margin-top: -1px; }
.stage { flex: 1; display: flex; justify-content: space-between; padding-right: 0; min-width: 0; }
.slide { position: relative; width: 881px; height: 496px; margin: 11px 0 0 74px; background: #fff; outline: 1px solid #c6c6c6; outline-offset: -1px; flex: none; overflow: hidden; }
.art { position: absolute; inset: 0; width: 881px; height: 496px; }
.circ { font: 700 40px "Noto Sans", "Open Sans", sans-serif; fill: #fff; text-anchor: middle; }
.bigc { position: absolute; left: 90px; top: 163px; font: 700 141px/200px "Noto Sans", sans-serif; color: #000; }
.mulu { position: absolute; left: 212px; top: 225px; font: 36px/52px "Noto Sans CJK SC", sans-serif; color: #111; }
.ontent { position: absolute; left: 178px; top: 278px; font: 34px/48px "Noto Sans", sans-serif; color: #111; }
.block { position: absolute; width: 320px; }
.market { left: 492px; top: 29.500px; } .model { left: 421px; top: 140.500px; } .team { left: 504px; top: 264.500px; } .fund { left: 390px; top: 391.500px; }
.zh { font: 700 29px/33px "Noto Sans CJK SC", sans-serif; color: #000; }
.en { font: 16px/20px "Noto Sans", sans-serif; color: #111; white-space: nowrap; }
.desc { margin-top: 4px; font: 11px/16.500px "Noto Sans CJK SC", "Noto Sans", sans-serif; color: #44546a; white-space: nowrap; }

/* status */
.status { flex: 1; min-height: 0; margin-top: 2px; background: #f3f3f3; border-top: 1px solid #c6c6c6; display: flex; align-items: center; font-size: 15px; color: #444; white-space: nowrap; }
.st1 { margin-left: 11px; }
.st-note { width: 18px; height: 16px; margin-left: 23px; }
.st-lang { margin-left: 21px; }
.grow { flex: 1; }
.st-n { width: 13px; height: 13px; }
.st-t { margin-left: 6px; }
.st-c { width: 18px; height: 18px; margin-left: 26px; }
.st-t2 { margin-left: 3px; margin-right: 23px; }
.vb { width: 50px; height: 100%; display: flex; align-items: center; justify-content: center; flex: none; }
.vb svg { width: 17px; height: 17px; }
.vb.on { background: #c6c6c6; }
.zm-minus { width: 9px; height: 2px; margin-left: 24px; }
.slider { width: 125px; height: 1px; margin-left: 7px; background: #aaa; position: relative; display: block; }
.tick { position: absolute; left: 62px; top: -3px; width: 1px; height: 7px; background: #aaa; }
.knob { position: absolute; left: 30px; top: -8px; width: 6px; height: 17px; background: #666; }
.zm-plus { width: 11px; height: 11px; margin-left: 5px; }
.pct { margin-left: 16px; width: 33px; }
.fit { width: 13px; height: 14px; margin-left: 16px; margin-right: 23px; }
</style>
